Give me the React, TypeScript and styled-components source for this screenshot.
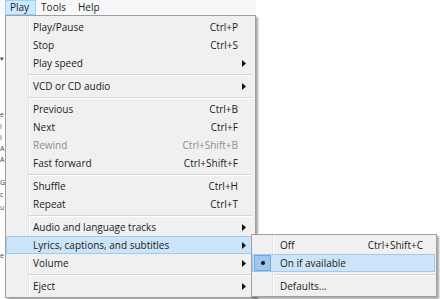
import styled, { createGlobalStyle } from 'styled-components';

const GlobalStyle = createGlobalStyle`
  html, body {
    margin: 0;
    padding: 0;
    background: #fff;
  }
  body {
    font-family: "Open Sans", "Noto Sans", sans-serif;
  }
`;

const Screen = styled.div`
  position: relative;
  width: 440px;
  height: 299px;
  overflow: hidden;
  background: #fff;
  font-family: "Open Sans", "Noto Sans", sans-serif;
  font-size: 10px;
  color: #1b1b1b;
`;

const MenuBar = styled.div`
  display: flex;
  width: 256px;
  height: 15px;
  padding-left: 5px;
  box-sizing: border-box;
  background: #f7f8f9;
`;

const BarItem = styled.div<{ $open?: boolean }>`
  height: 15px;
  line-height: 13px;
  padding: 0 6px 0 4px;
  box-sizing: border-box;
  border: 1px solid ${(p) => (p.$open ? '#99d1ff' : 'transparent')};
  background: ${(p) => (p.$open ? '#cce8ff' : 'transparent')};
`;

const Backdrop = styled.div`
  display: flex;
  flex-direction: column;
  width: 5px;
  padding-top: 38px;
`;

const BackLine = styled.div<{ $h: number }>`
  height: ${(p) => p.$h}px;
  line-height: ${(p) => p.$h}px;
  color: #3b3f6e;
  font-size: 7px;
`;

const Dropdown = styled.div`
  position: absolute;
  left: 5px;
  top: 15px;
  width: 251px;
  box-sizing: border-box;
  border: 1px solid #a0a0a0;
  padding: 2px 2px 2px 0;
  background-color: #f0f0f0;
  background-image: linear-gradient(
    to right,
    transparent 22px,
    #e2e3e3 22px,
    #e2e3e3 23px,
    #ffffff 23px,
    #ffffff 24px,
    transparent 24px
  );
  box-shadow: 2px 2px 2px rgba(0, 0, 0, 0.35);
`;

const Row = styled.div<{ $active?: boolean; $disabled?: boolean; $pad: number; $end: number }>`
  display: grid;
  grid-template-columns: 1fr auto ${(p) => p.$end}px;
  align-items: center;
  height: 18px;
  padding-left: ${(p) => p.$pad}px;
  position: relative;
  color: ${(p) => (p.$disabled ? '#8d8d8d' : '#1b1b1b')};
  background: ${(p) => (p.$active ? '#cce4f7' : 'transparent')};
  box-shadow: ${(p) => (p.$active ? 'inset 0 0 0 1px #a3caed' : 'none')};
`;

const Label = styled.span`
  white-space: nowrap;
`;

const Shortcut = styled.span`
  white-space: nowrap;
  text-align: right;
`;

const ArrowCell = styled.span`
  display: flex;
  align-items: center;
  padding-left: 4px;
`;

const Separator = styled.div<{ $indent: number }>`
  display: flex;
  align-items: center;
  height: 5px;
  margin-left: ${(p) => p.$indent}px;
  &::before {
    content: '';
    flex: 1;
    height: 1px;
    background: #d7d7d7;
    border-bottom: 1px solid #ffffff;
  }
`;

const Submenu = styled.div`
  position: absolute;
  left: 251px;
  top: 234px;
  width: 186px;
  box-sizing: border-box;
  border: 1px solid #a0a0a0;
  padding: 1px 1px 1px 0;
  background-color: #f0f0f0;
  background-image: linear-gradient(
    to right,
    transparent 20px,
    #e2e3e3 20px,
    #e2e3e3 21px,
    #ffffff 21px,
    #ffffff 22px,
    transparent 22px
  );
  box-shadow: 2px 2px 2px rgba(0, 0, 0, 0.35);
`;

const CheckBox = styled.span`
  position: absolute;
  left: 2px;
  top: 1px;
  width: 17px;
  height: 16px;
  box-sizing: border-box;
  display: flex;
  align-items: center;
  justify-content: center;
  background: #9dc7ee;
  border: 1px solid #72a9df;
`;

const Bullet = styled.span`
  width: 4px;
  height: 4px;
  border-radius: 50%;
  background: #111;
`;

const Arrow = () => (
  <svg width="4" height="7" viewBox="0 0 4 7">
    <polygon points="0,0 4,3.5 0,7" fill="#111" />
  </svg>
);

type Item =
  | { sep: true }
  | { sep?: false; label: string; key?: string; sub?: boolean; disabled?: boolean; active?: boolean };

const playItems: Item[] = [
  { label: 'Play/Pause', key: 'Ctrl+P' },
  { label: 'Stop', key: 'Ctrl+S' },
  { label: 'Play speed', sub: true },
  { sep: true },
  { label: 'VCD or CD audio', sub: true },
  { sep: true },
  { label: 'Previous', key: 'Ctrl+B' },
  { label: 'Next', key: 'Ctrl+F' },
  { label: 'Rewind', key: 'Ctrl+Shift+B', disabled: true },
  { label: 'Fast forward', key: 'Ctrl+Shift+F' },
  { sep: true },
  { label: 'Shuffle', key: 'Ctrl+H' },
  { label: 'Repeat', key: 'Ctrl+T' },
  { sep: true },
  { label: 'Audio and language tracks', sub: true },
  { label: 'Lyrics, captions, and subtitles', sub: true, active: true },
  { label: 'Volume', sub: true },
  { sep: true },
  { label: 'Eject', sub: true },
];

// bits of the window behind the menu, peeking out on the left
const backLines: [string, number][] = [
  ['▾', 12],
  ['', 44],
  ['e', 12],
  ['i', 11],
  ['i', 11],
  ['A', 11],
  ['A', 12],
  ['', 11],
  ['G', 12],
  ['c', 12],
  ['u', 14],
  ['', 35],
  ['e', 12],
];

export default function App() {
  return (
    <>
      <GlobalStyle />
      <Screen>
        <MenuBar>
          <BarItem $open>Play</BarItem>
          <BarItem>Tools</BarItem>
          <BarItem>Help</BarItem>
        </MenuBar>
        <Backdrop>
          {backLines.map(([t, h], i) => (
            <BackLine key={i} $h={h}>
              {t}
            </BackLine>
          ))}
        </Backdrop>

        <Dropdown>
          {playItems.map((it, i) =>
            it.sep ? (
              <Separator key={i} $indent={23} />
            ) : (
              <Row key={i} $pad={27} $end={15} $active={it.active} $disabled={it.disabled}>
                <Label>{it.label}</Label>
                <Shortcut>{it.key}</Shortcut>
                <ArrowCell>{it.sub && <Arrow />}</ArrowCell>
              </Row>
            )
          )}
        </Dropdown>

        <Submenu>
          <Row $pad={28} $end={12}>
            <Label>Off</Label>
            <Shortcut>Ctrl+Shift+C</Shortcut>
            <span />
          </Row>
          <Row $pad={28} $end={12} $active>
            <CheckBox>
              <Bullet />
            </CheckBox>
            <Label>On if available</Label>
            <Shortcut />
            <span />
          </Row>
          <Separator $indent={22} />
          <Row $pad={28} $end={12}>
            <Label>Defaults...</Label>
            <Shortcut />
            <span />
          </Row>
        </Submenu>
      </Screen>
    </>
  );
}
